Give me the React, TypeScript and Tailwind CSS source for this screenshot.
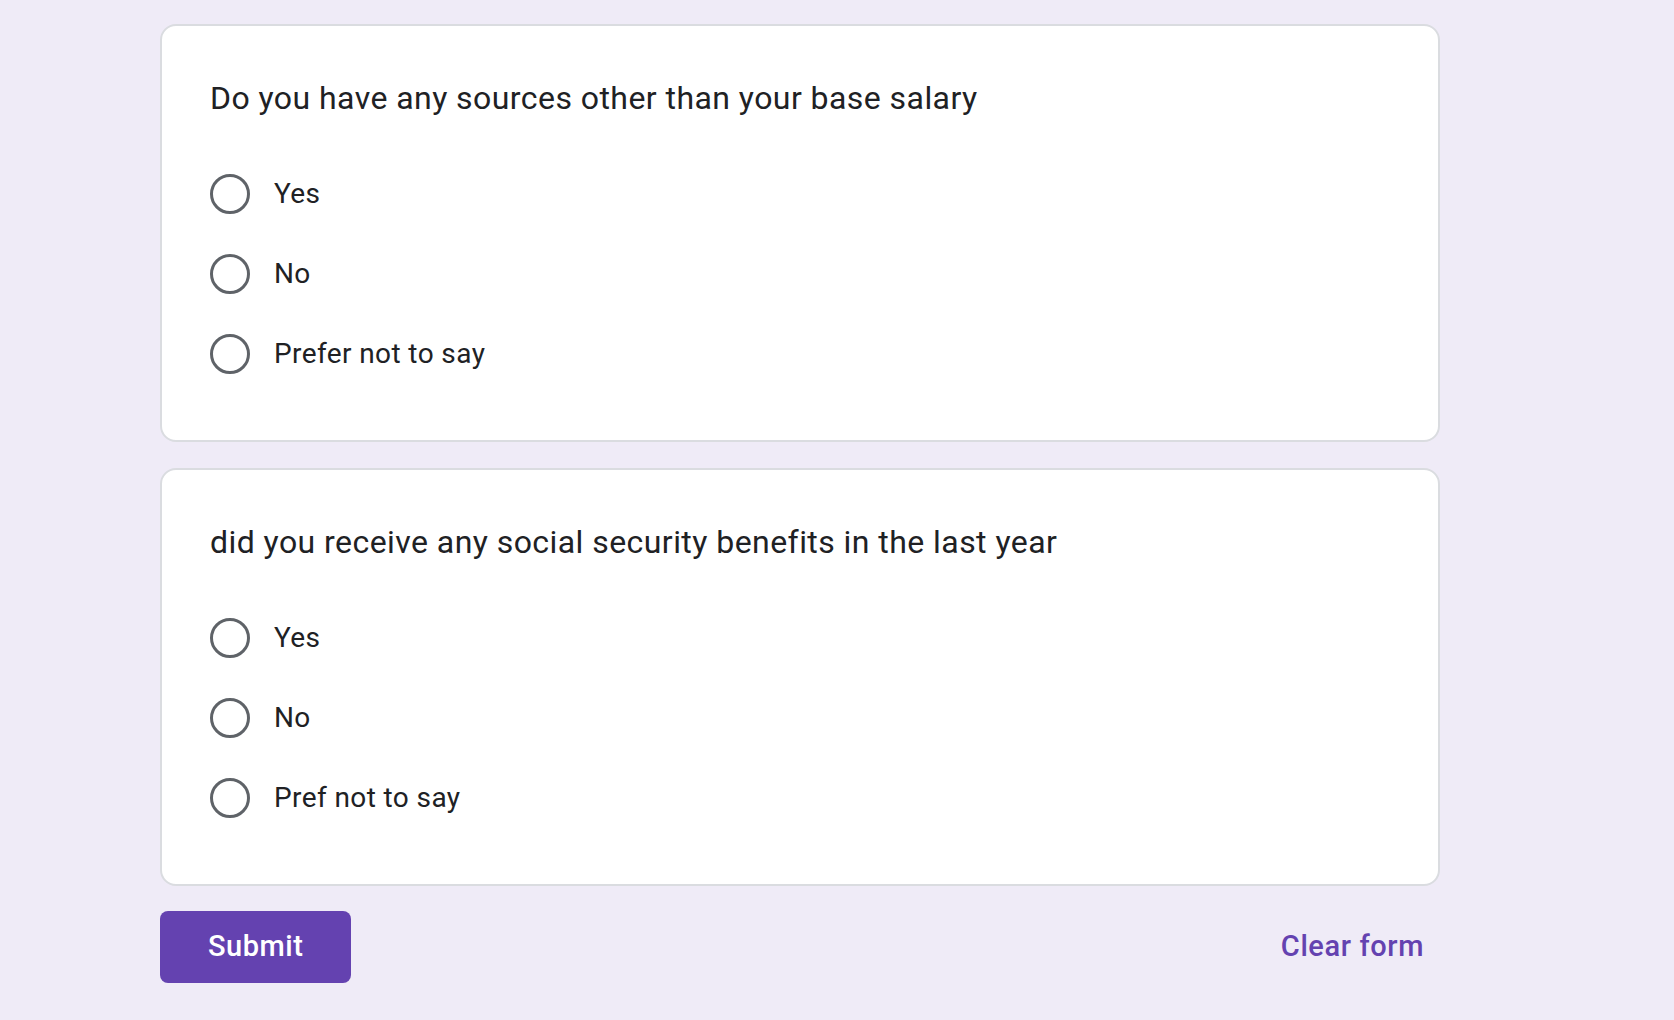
import React from 'react';

type Question = {
  id: number;
  title: string;
  options: string[];
};

const questions: Question[] = [
  {
    id: 1,
    title: 'Do you have any sources other than your base salary',
    options: ['Yes', 'No', 'Prefer not to say'],
  },
  {
    id: 2,
    title: 'did you receive any social security benefits in the last year',
    options: ['Yes', 'No', 'Pref not to say'],
  },
];

function QuestionCard({ question }: { question: Question }) {
  return (
    <div className="w-[1280px] rounded-[16px] border-2 border-[#dadce0] bg-white px-12 pt-12 pb-[46px]">
      <h2 className="text-[32px] leading-[48px] tracking-[0.44px] text-[#202124] font-['Roboto',sans-serif]">
        {question.title}
      </h2>
      <div className="mt-8 flex flex-col">
        {question.options.map((opt) => (
          <label key={opt} className="flex h-[80px] items-center cursor-pointer">
            <span className="h-[40px] w-[40px] rounded-full border-[3px] border-[#5f6368]" />
            <span className="ml-6 text-[28px] leading-[40px] tracking-[0.4px] text-[#202124] font-['Roboto',sans-serif]">
              {opt}
            </span>
          </label>
        ))}
      </div>
    </div>
  );
}

export default function App() {
  return (
    <div className="min-h-[1020px] w-full bg-[#efebf7] pl-[160px] pt-[24px]">
      <div className="flex w-[1280px] flex-col gap-[26px]">
        {questions.map((q) => (
          <QuestionCard key={q.id} question={q} />
        ))}
      </div>
      <div className="mt-[25px] flex w-[1280px] items-center justify-between">
        <button className="h-[72px] rounded-[8px] bg-[#6442b0] px-12 text-[29px] font-medium tracking-[0.5px] text-white font-['Roboto',sans-serif]">
          Submit
        </button>
        <button className="px-4 text-[29px] font-medium tracking-[0.6px] text-[#6442b0] font-['Roboto',sans-serif]">
          Clear form
        </button>
      </div>
    </div>
  );
}
